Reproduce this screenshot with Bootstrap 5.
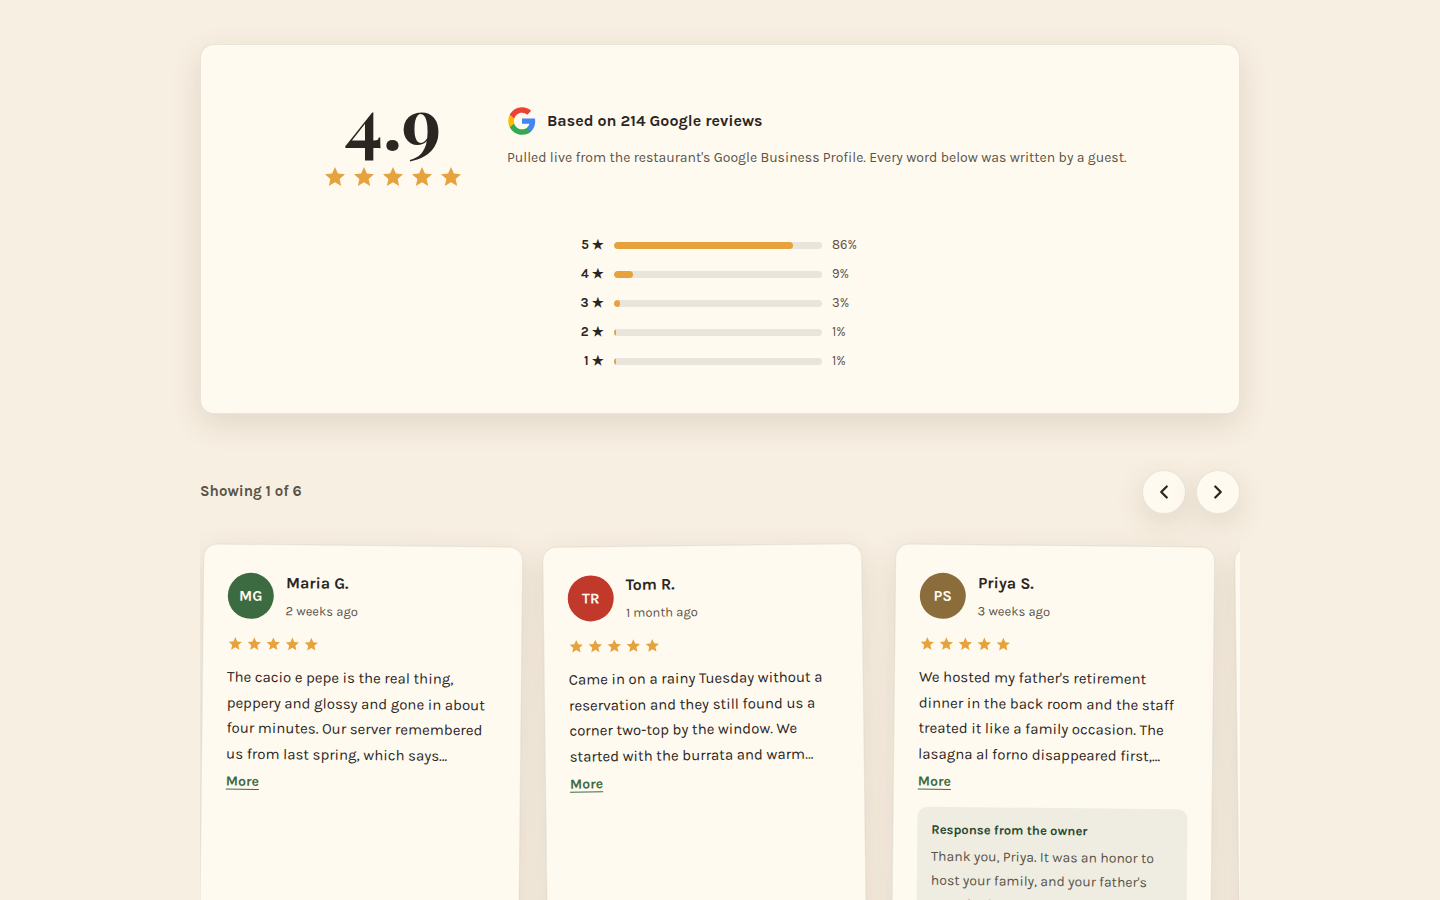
<!DOCTYPE html>
<html lang="en">
<head>
<meta charset="utf-8">
<meta name="viewport" content="width=device-width, initial-scale=1">
<title>Guest reviews</title>
<link href="https://cdn.jsdelivr.net/npm/bootstrap@5.3.0/dist/css/bootstrap.min.css" rel="stylesheet">
<style>
:root{--cream:#f7efe2;--paper:#fffaf0;--ink:#2b2622;--muted:#5a5348;--gold:#e6a23c;--leaf:#3d6b41;--edge:rgba(43,38,34,.1);--lift:0 10px 30px rgba(107,74,36,.14)}
body{background:var(--cream);color:var(--ink);font-family:Karla,"Liberation Sans",sans-serif;font-size:15px;line-height:1.7}
.reviews{max-width:1040px;padding-top:44px}
.summary{background:var(--paper);border:1px solid var(--edge);border-radius:14px;box-shadow:var(--lift);padding:42px 44px 34px}
.summary-top{column-gap:44px}
.score{font:700 72px/66px "Playfair Display","Liberation Serif",serif;margin-bottom:12px}
.stars{color:var(--gold)}
.stars svg{display:block;fill:currentColor}
.stars-lg{gap:5px}
.stars-lg svg{width:24px;height:24px}
.stars-sm{gap:3px}
.stars-sm svg{width:16px;height:16px}
.about{padding-top:19px;max-width:610px}
.source{font-size:16px;font-weight:700;gap:10px;margin-bottom:10px}
.note{font-size:14px;color:var(--muted)}
@media (min-width:992px){.note{white-space:nowrap}}
.histogram{width:100%;max-width:300px;margin-top:45px}
.hist-row{display:grid;grid-template-columns:34px 1fr 38px;column-gap:10px;align-items:center;font-size:13px;line-height:22px;margin-bottom:7px}
.hist-row .progress{height:7px;background:#eae5dc;border-radius:7px}
.hist-row .progress-bar{background:var(--gold);border-radius:7px}
.pct{color:var(--muted)}
.toolbar-row{margin-top:56px}
.count{font-weight:700;color:var(--muted)}
.nav-pair{gap:10px}
.nav-btn{display:grid;place-items:center;width:44px;height:44px;background:var(--paper);border:1px solid var(--edge);border-radius:50%;box-shadow:var(--lift);color:var(--ink)}
.track{overflow:hidden;gap:26px;padding:31px 0 40px}
.review{flex:0 0 320px;min-height:640px;background:var(--paper);border:1px solid var(--edge);border-radius:14px;box-shadow:var(--lift);padding:24px;transform:rotate(.6deg)}
.review:nth-child(even){transform:rotate(-.7deg)}
.who{gap:12px;margin-bottom:14px}
.avatar{width:46px;height:46px;color:var(--paper);font-weight:700;line-height:46px}
.who h3{font-size:16px;font-weight:700;line-height:27px;margin-bottom:4px}
.when{font-size:13px;line-height:22px;color:var(--muted)}
.quote{margin:13px 0 3px}
.more{font-size:14px;font-weight:700;line-height:24px;color:var(--leaf);background:none;border:0;text-decoration:underline;text-underline-offset:3px}
.reply{margin-top:13px;padding:12px 14px;border-radius:10px;background:#efede1;color:var(--muted);font-size:14px}
.reply h4{font-size:13px;font-weight:700;line-height:22px;margin-bottom:4px;color:#2a4a32}
</style>
</head>
<body>
<svg width="0" height="0" class="position-absolute" aria-hidden="true"><symbol id="star" viewBox="0 0 24 24"><path d="M12 2l2.900 6.600 7.100.700-5.400 4.700 1.600 7L12 17.300 5.800 21l1.600-7L2 9.300l7.100-.7z"/></symbol></svg>
<main class="reviews container-fluid px-0">
  <section class="summary d-flex flex-column align-items-center">
    <div class="summary-top d-flex flex-wrap justify-content-center">
      <div class="text-center">
        <div class="score">4.9</div>
        <div class="stars stars-lg d-flex" role="img" aria-label="5 stars"><svg><use href="#star"/></svg><svg><use href="#star"/></svg><svg><use href="#star"/></svg><svg><use href="#star"/></svg><svg><use href="#star"/></svg></div>
      </div>
      <div class="about">
        <div class="source d-flex align-items-center">
          <svg width="30" height="30" viewBox="0 0 24 24" aria-hidden="true"><path fill="#4285f4" d="M22.560 12.250c0-.78-.07-1.530-.2-2.250H12v4.260h5.920c-.26 1.370-1.040 2.530-2.210 3.310v2.770h3.570c2.080-1.920 3.280-4.740 3.280-8.090z"/><path fill="#34a853" d="M12 23c2.970 0 5.460-.98 7.280-2.660l-3.570-2.770c-.98.660-2.230 1.060-3.710 1.060-2.860 0-5.290-1.930-6.160-4.530H2.180v2.840C3.990 20.530 7.700 23 12 23z"/><path fill="#fbbc05" d="M5.840 14.090c-.22-.66-.35-1.360-.35-2.090s.13-1.430.35-2.090V7.070H2.180C1.430 8.550 1 10.220 1 12s.43 3.450 1.180 4.930z"/><path fill="#ea4335" d="M12 5.380c1.620 0 3.060.56 4.210 1.640l3.150-3.150C17.450 2.090 14.970 1 12 1 7.700 1 3.990 3.470 2.180 7.070l3.660 2.840c.87-2.600 3.300-4.530 6.160-4.530z"/></svg>
          <span>Based on 214 Google reviews</span>
        </div>
        <p class="note mb-0">Pulled live from the restaurant's Google Business Profile. Every word below was written by a guest.</p>
      </div>
    </div>
    <div class="histogram">
      <div class="hist-row"><strong class="text-end">5 ★</strong><div class="progress"><div class="progress-bar" style="width:86%"></div></div><span class="pct">86%</span></div>
      <div class="hist-row"><strong class="text-end">4 ★</strong><div class="progress"><div class="progress-bar" style="width:9%"></div></div><span class="pct">9%</span></div>
      <div class="hist-row"><strong class="text-end">3 ★</strong><div class="progress"><div class="progress-bar" style="width:3%"></div></div><span class="pct">3%</span></div>
      <div class="hist-row"><strong class="text-end">2 ★</strong><div class="progress"><div class="progress-bar" style="width:1%"></div></div><span class="pct">1%</span></div>
      <div class="hist-row"><strong class="text-end">1 ★</strong><div class="progress"><div class="progress-bar" style="width:1%"></div></div><span class="pct">1%</span></div>
    </div>
  </section>

  <div class="toolbar-row d-flex justify-content-between align-items-center">
    <span class="count">Showing 1 of 6</span>
    <div class="nav-pair d-flex">
      <button type="button" class="nav-btn p-0" aria-label="Previous review"><svg width="22" height="22" viewBox="0 0 24 24" fill="none" stroke="currentColor" stroke-width="2.500" stroke-linecap="round" stroke-linejoin="round"><path d="M15 18l-6-6 6-6"/></svg></button>
      <button type="button" class="nav-btn p-0" aria-label="Next review"><svg width="22" height="22" viewBox="0 0 24 24" fill="none" stroke="currentColor" stroke-width="2.500" stroke-linecap="round" stroke-linejoin="round"><path d="M9 18l6-6-6-6"/></svg></button>
    </div>
  </div>

  <section class="track d-flex" aria-label="Reviews">
    <article class="review">
      <div class="who d-flex align-items-center"><div class="avatar rounded-circle text-center" style="background:#3d6b41">MG</div><div><h3>Maria G.</h3><div class="when">2 weeks ago</div></div></div>
      <div class="stars stars-sm d-flex" role="img" aria-label="5 stars"><svg><use href="#star"/></svg><svg><use href="#star"/></svg><svg><use href="#star"/></svg><svg><use href="#star"/></svg><svg><use href="#star"/></svg></div>
      <p class="quote">The cacio e pepe is the real thing, peppery and glossy and gone in about four minutes. Our server remembered us from last spring, which says…</p>
      <button type="button" class="more d-block p-0">More</button>
    </article>
    <article class="review">
      <div class="who d-flex align-items-center"><div class="avatar rounded-circle text-center" style="background:#c0392b">TR</div><div><h3>Tom R.</h3><div class="when">1 month ago</div></div></div>
      <div class="stars stars-sm d-flex" role="img" aria-label="5 stars"><svg><use href="#star"/></svg><svg><use href="#star"/></svg><svg><use href="#star"/></svg><svg><use href="#star"/></svg><svg><use href="#star"/></svg></div>
      <p class="quote">Came in on a rainy Tuesday without a reservation and they still found us a corner two-top by the window. We started with the burrata and warm…</p>
      <button type="button" class="more d-block p-0">More</button>
    </article>
    <article class="review">
      <div class="who d-flex align-items-center"><div class="avatar rounded-circle text-center" style="background:#8a6d3b">PS</div><div><h3>Priya S.</h3><div class="when">3 weeks ago</div></div></div>
      <div class="stars stars-sm d-flex" role="img" aria-label="5 stars"><svg><use href="#star"/></svg><svg><use href="#star"/></svg><svg><use href="#star"/></svg><svg><use href="#star"/></svg><svg><use href="#star"/></svg></div>
      <p class="quote">We hosted my father's retirement dinner in the back room and the staff treated it like a family occasion. The lasagna al forno disappeared first,…</p>
      <button type="button" class="more d-block p-0">More</button>
      <div class="reply">
        <h4>Response from the owner</h4>
        <p class="mb-0">Thank you, Priya. It was an honor to host your family, and your father's toast had the whole kitchen quiet for a moment.</p>
      </div>
    </article>
    <article class="review"></article>
  </section>
</main>
<script src="https://cdn.jsdelivr.net/npm/bootstrap@5.3.0/dist/js/bootstrap.bundle.min.js"></script>
</body>
</html>
